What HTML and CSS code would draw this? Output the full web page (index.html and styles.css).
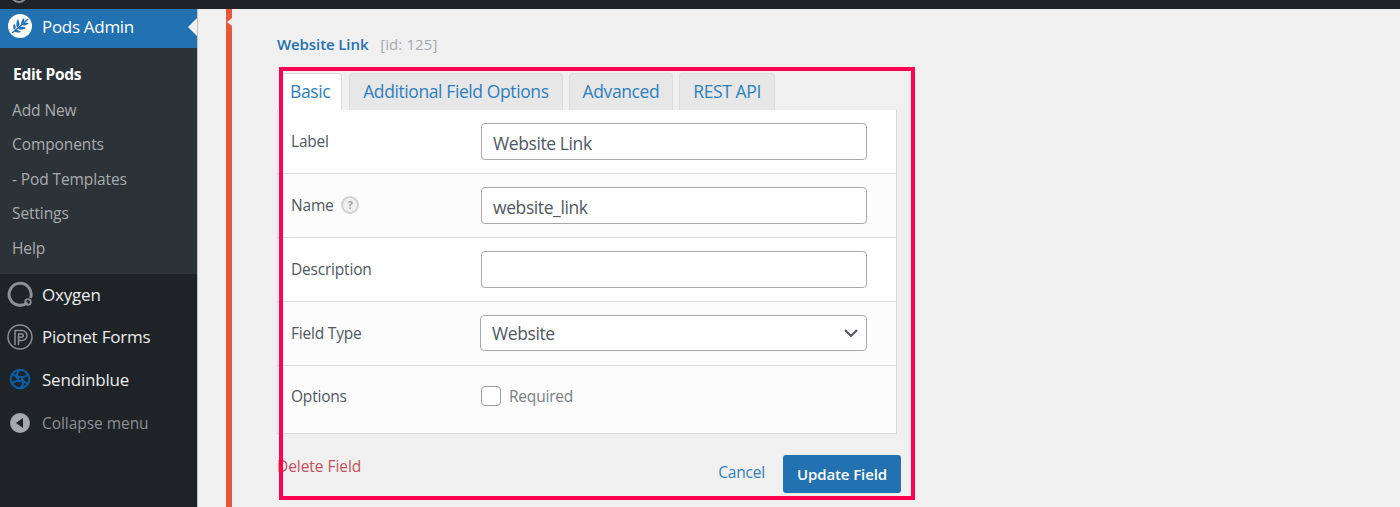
FILE: index.html
```html
<!DOCTYPE html>
<html lang="en">
<head>
    <meta charset="UTF-8">
    <meta name="viewport" content="width=device-width, initial-scale=1.0">
    <title>Edit Pods</title>
    <link rel="stylesheet" href="styles.css">
</head>
<body>
    <div class="topbar"><span class="wp-logo"></span></div>

    <div class="layout">
        <nav class="sidebar">
            <a class="menu-current">
                <svg class="menu-icon" viewBox="-1 -1 26 26">
                    <circle cx="12" cy="12" r="12" fill="#fff"/>
                    <path d="M4 19 C9 15 14 11 20 5" fill="none" stroke="#2271b1" stroke-width="1.4"/>
                    <path d="M9 14 C8 11 8 8 10 5 C11.500 8 11.500 10 11 12 Z M13 10.500 C13 8 14 5.500 16 4 C16.500 6 16.500 7.500 15.500 8.500 Z M10 15 C13 16 15 16 18 14 C16 12.500 14 12.500 12 13 Z M14 11 C16 12 18 11.500 21 9.500 C19 8.500 17.500 8.500 16 9 Z M6 17 C8 18.500 10 19 13 18 C11 16.500 9.500 16 8 15.500 Z M6 16 C5 14 5 12 6 9.500 C7.500 11 8 13 7.500 14.500 Z" fill="#2271b1"/>
                </svg>
                <span>Pods Admin</span>
            </a>
            <ul class="submenu">
                <li class="submenu-current">Edit Pods</li>
                <li>Add New</li>
                <li>Components</li>
                <li>- Pod Templates</li>
                <li>Settings</li>
                <li>Help</li>
            </ul>
            <a class="menu-item">
                <svg class="menu-icon" viewBox="0 0 26 26">
                    <path d="M20.500 21.500 A11 11 0 1 1 23.500 17" fill="none" stroke="#8c8f94" stroke-width="3"/>
                    <circle cx="21" cy="21" r="2.800" fill="none" stroke="#8c8f94" stroke-width="1.800"/>
                </svg>
                <span>Oxygen</span>
            </a>
            <a class="menu-item">
                <svg class="menu-icon" viewBox="0 0 26 26">
                    <circle cx="13" cy="13" r="12" fill="none" stroke="#8c8f94" stroke-width="1.500"/>
                    <path d="M8 21 V6.500 H15 A5 5 0 0 1 15 16.500 H11.500 M11.500 21 V10 H15 A1.700 1.700 0 0 1 15 13.300 H11.500" fill="none" stroke="#8c8f94" stroke-width="1.500"/>
                </svg>
                <span>Piotnet Forms</span>
            </a>
            <a class="menu-item">
                <svg class="menu-icon" viewBox="-13 -13 26 26">
                    <g fill="none" stroke="#0b5fa8" stroke-width="2">
                        <circle r="9.300"/>
                        <circle r="2.200"/>
                        <path d="M0 -9.300 C-3.500 -6.500 -3.500 -3.500 -2 -1"/>
                        <path d="M8 -4.700 C5.500 -2 3.500 -1.500 1 -2"/>
                        <path d="M8 4.700 C4.500 3.500 3 2.500 2.200 0"/>
                        <path d="M0 9.300 C3.500 6.500 3.500 3.500 2 1"/>
                        <path d="M-8 4.700 C-5.500 2 -3.500 1.500 -1 2"/>
                        <path d="M-8 -4.700 C-4.500 -3.500 -3 -2.500 -2.200 0"/>
                    </g>
                </svg>
                <span>Sendinblue</span>
            </a>
            <a class="menu-collapse">
                <svg class="menu-icon" viewBox="-1 -1 26 26">
                    <circle cx="12" cy="12" r="10" fill="#a7aaad"/>
                    <path d="M15 7 V17 L8 12 Z" fill="#1d2327"/>
                </svg>
                <span>Collapse menu</span>
            </a>
        </nav>

        <main class="main">
            <div class="pod-field">
                <span class="notch"></span>
                <p class="field-title"><strong>Website Link</strong> <span class="field-id">[id: 125]</span></p>

                <div class="tabs">
                    <a class="tab tab-active">Basic</a>
                    <a class="tab">Additional Field Options</a>
                    <a class="tab">Advanced</a>
                    <a class="tab">REST API</a>
                </div>

                <div class="panel">
                    <div class="row">
                        <label class="row-label">Label</label>
                        <div class="control"><div class="text-input">Website Link</div></div>
                    </div>
                    <div class="row row-alt">
                        <label class="row-label">Name <span class="help">?</span></label>
                        <div class="control"><div class="text-input">website_link</div></div>
                    </div>
                    <div class="row">
                        <label class="row-label">Description</label>
                        <div class="control"><div class="text-input"></div></div>
                    </div>
                    <div class="row row-alt">
                        <label class="row-label">Field Type</label>
                        <div class="control">
                            <div class="text-input select-input">
                                <span>Website</span>
                                <svg class="chevron" viewBox="0 0 14 8"><path d="M1 1 L7 7 L13 1" fill="none" stroke="#50575e" stroke-width="2"/></svg>
                            </div>
                        </div>
                    </div>
                    <div class="row row-last">
                        <label class="row-label">Options</label>
                        <div class="control check-wrap">
                            <span class="checkbox"></span>
                            <span>Required</span>
                        </div>
                    </div>
                </div>

                <div class="actions">
                    <a class="delete-link">Delete Field</a>
                    <div class="actions-right">
                        <a class="cancel-link">Cancel</a>
                        <button class="update-btn">Update Field</button>
                    </div>
                </div>

                <div class="highlight"></div>
            </div>
        </main>
    </div>
</body>
</html>
```

FILE: styles.css
```css
* {
    box-sizing: border-box;
}

html, body {
    height: 100%;
}

body {
    margin: 0;
    background-color: #f0f0f1;
    font-family: "Open Sans", "Noto Sans", Arial, sans-serif;
    color: #50575e;
    overflow: hidden;
}

.topbar {
    height: 9px;
    padding-left: 10px;
    background-color: #1d2327;
    overflow: hidden;
}

.wp-logo {
    display: block;
    width: 18px;
    height: 18px;
    margin-top: -15px;
    border: 2px solid #8c8f94;
    border-radius: 50%;
}

.layout {
    display: flex;
    height: 498px;
}

/* admin menu */

.sidebar {
    width: 198px;
    flex-shrink: 0;
    background-color: #1d2327;
    border-right: 1px solid #c3c4c7;
}

.menu-current {
    position: relative;
    display: flex;
    align-items: center;
    height: 39px;
    padding: 0 0 5px 7px;
    background-color: #2271b1;
    color: #fff;
    font-size: 17px;
    letter-spacing: -0.3px;
}

.menu-current::after {
    content: "";
    position: absolute;
    right: 0;
    top: 9px;
    border: 9px solid transparent;
    border-right-color: #f0f0f1;
    border-left-width: 0;
}

.menu-icon {
    width: 26px;
    height: 26px;
    margin-right: 9px;
    flex-shrink: 0;
}

.submenu {
    list-style: none;
    margin: 0;
    padding: 10px 0 9px;
    background-color: #2c3338;
}

.submenu li {
    height: 34.500px;
    line-height: 34px;
    padding-left: 12px;
    font-size: 15.500px;
    letter-spacing: -0.1px;
    color: #a9acaf;
}

.submenu .submenu-current {
    padding-left: 13px;
    line-height: 33px;
    font-size: 15.500px;
    letter-spacing: -0.3px;
    color: #fff;
    font-weight: 700;
}

.menu-item,
.menu-collapse {
    display: flex;
    align-items: center;
    height: 42.500px;
    padding: 0 0 2px 7px;
    font-size: 17px;
    letter-spacing: -0.2px;
    color: #eceded;
}

.menu-collapse {
    padding-bottom: 0;
    font-size: 15.500px;
    letter-spacing: -0.05px;
    color: #8c8f94;
}

/* pod field editor */

.main {
    flex: 1;
    padding-left: 28px;
}

.pod-field {
    position: relative;
    height: 100%;
    width: 690px;
    padding-left: 45px;
    border-left: 6px solid #e9573a;
}

.notch {
    position: absolute;
    left: -5px;
    top: 9px;
    border: 4px solid transparent;
    border-right: 5px solid #f0f0f1;
    border-left-width: 0;
}

.field-title {
    margin: 0;
    padding-top: 26px;
    height: 64px;
    line-height: 18px;
    font-size: 15px;
    letter-spacing: -0.1px;
}

.field-title strong {
    color: #2271b1;
    font-weight: 600;
}

.field-id {
    margin-left: 8px;
    letter-spacing: 0.1px;
    color: #a7aaad;
}

.tabs {
    display: flex;
    gap: 6px;
    height: 37px;
    padding-left: 5px;
}

.tab {
    display: block;
    padding: 0 13px;
    line-height: 35px;
    font-size: 17.500px;
    letter-spacing: -0.4px;
    color: #2e7fbd;
    background-color: #e7e7e8;
    border: 1px solid #dcdcde;
    border-bottom: 0;
    border-radius: 4px 4px 0 0;
}

.tab-active {
    padding: 0 11px 0 7px;
    margin-right: 1px;
    background-color: #fff;
    border-color: #dcdcde;
}

.panel {
    width: 620px;
    background-color: #fff;
    border: 1px solid #dcdcde;
    border-top: 0;
}

.row {
    display: flex;
    align-items: center;
    height: 64px;
    padding-left: 12px;
    border-bottom: 1px solid #dcdcde;
    background-color: #fff;
}

.row-alt {
    background-color: #fcfcfc;
}

.row-last {
    height: 67px;
    background-color: #fcfcfc;
    border-bottom: 0;
}

.row-label {
    width: 190px;
    flex-shrink: 0;
    margin: -1px 0 0 1px;
    font-size: 15.500px;
    letter-spacing: -0.2px;
}

.row-last .row-label {
    margin-top: -7px;
}

.help {
    display: inline-block;
    width: 18px;
    height: 18px;
    margin-left: 4px;
    vertical-align: 2px;
    border-radius: 50%;
    border: 2px solid #d0d0d0;
    background-color: #f0f0f1;
    text-align: center;
    line-height: 14px;
    font-size: 11px;
    font-weight: 700;
    color: #a0a0a0;
}

.control {
    width: 386px;
}

.text-input {
    height: 37px;
    padding: 0 11px;
    line-height: 38px;
    font-size: 17.500px;
    letter-spacing: -0.4px;
    color: #50575e;
    background-color: #fff;
    border: 1px solid #a7aaad;
    border-radius: 4px;
}

.select-input {
    display: flex;
    align-items: center;
    justify-content: space-between;
    width: 387px;
    margin: -1px 0 0 -1px;
    height: 36px;
    line-height: 38px;
}

.chevron {
    width: 14px;
    height: 8px;
    margin-right: -3px;
}

.check-wrap {
    display: flex;
    align-items: center;
    gap: 8px;
    margin-top: -7px;
    font-size: 15.500px;
    letter-spacing: -0.2px;
    color: #7a7f84;
}

.checkbox {
    width: 20px;
    height: 20px;
    background-color: #fff;
    border: 1px solid #9a9da1;
    border-radius: 4px;
}

.actions {
    display: flex;
    justify-content: space-between;
    width: 624px;
}

.delete-link {
    margin-top: 21px;
    font-size: 15.500px;
    letter-spacing: -0.05px;
    color: #c4515c;
}

.actions-right {
    display: flex;
    align-items: center;
    gap: 18px;
    margin-top: 21px;
}

.cancel-link {
    font-size: 15.500px;
    letter-spacing: -0.2px;
    color: #2e7fbd;
    margin-top: -4px;
}

.update-btn {
    width: 118px;
    height: 38px;
    padding: 0;
    font-family: inherit;
    font-size: 15px;
    font-weight: 600;
    letter-spacing: -0.1px;
    color: #fff;
    background-color: #2271b1;
    border: 0;
    border-radius: 3px;
}

/* pink box drawn over the screenshot */

.highlight {
    position: absolute;
    left: 47px;
    top: 58px;
    width: 636px;
    height: 433px;
    border: 4px solid #ff0055;
    pointer-events: none;
}
```
